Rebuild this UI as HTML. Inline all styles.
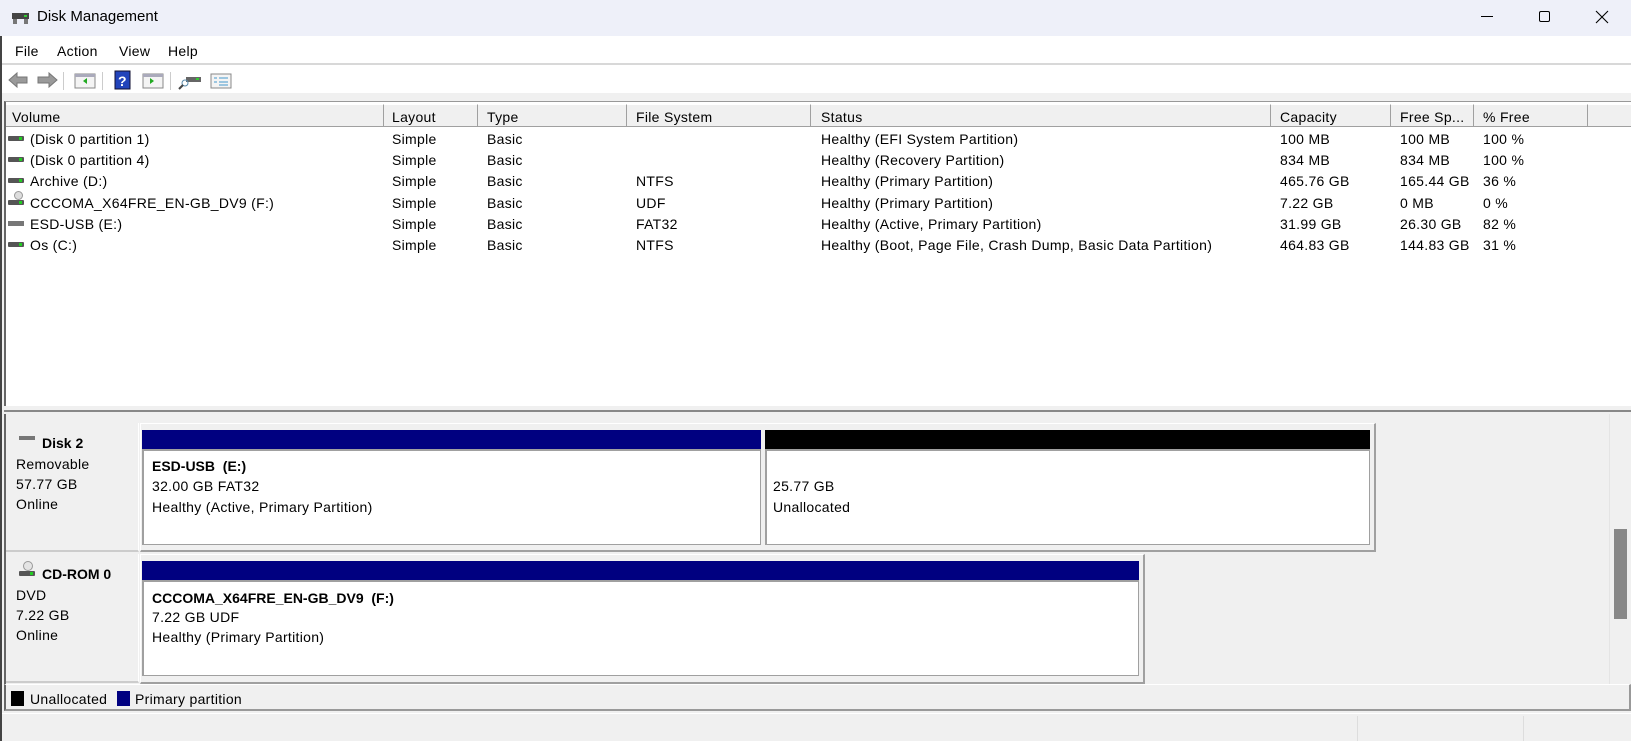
<!DOCTYPE html>
<html><head><meta charset="utf-8"><style>
*{margin:0;padding:0;box-sizing:border-box}
body{width:1631px;height:741px;overflow:hidden;background:#f0f0f0;font-family:"Liberation Sans",sans-serif;font-size:14px;color:#000;position:relative}
.a{position:absolute;white-space:nowrap}
.t{position:absolute;white-space:nowrap;line-height:16px;letter-spacing:0.3px}
.b{font-weight:bold;letter-spacing:0}
.hd{position:absolute;top:104px;height:23px;background:#f0f0f0;border-right:1px solid #a0a0a0;border-bottom:1px solid #a0a0a0;border-top:1px solid #fff}
.ic{position:absolute;width:16px;height:5px;background:#555;border-radius:1px}
.ic::after{content:"";position:absolute;right:2px;top:1px;width:3px;height:3px;background:#2c2}
.pbox{position:absolute;background:#fff;border:1px solid #a0a0a0;box-shadow:inset 1px 1px 0 #a0a0a0}
</style></head><body>
<div class="a" style="left:0;top:0;width:1631px;height:36px;background:#eef0f9"></div>
<div class="a" style="left:12px;top:10px;width:17px;height:14px;">
<div class="a" style="left:0;top:3px;width:17px;height:6px;background:#444"></div>
<div class="a" style="left:12px;top:5px;width:3px;height:2px;background:#3c3"></div>
<div class="a" style="left:1px;top:9px;width:4px;height:5px;background:#777"></div>
<div class="a" style="left:12px;top:9px;width:4px;height:5px;background:#777"></div>
</div>
<div class="t" style="left:37px;top:9px;font-size:15px;letter-spacing:0">Disk Management</div>
<div class="a" style="left:1481px;top:16px;width:12px;height:1px;background:#000"></div>
<div class="a" style="left:1539px;top:11px;width:11px;height:11px;border:1px solid #000;border-radius:2px"></div>
<svg class="a" style="left:1595px;top:10px" width="14" height="14"><path d="M1 1L13 13M13 1L1 13" stroke="#000" stroke-width="1.1"/></svg>
<div class="a" style="left:0;top:36px;width:1631px;height:27px;background:#fff"></div>
<div class="t" style="left:15px;top:43px">File</div>
<div class="t" style="left:57px;top:43px">Action</div>
<div class="t" style="left:119px;top:43px">View</div>
<div class="t" style="left:168px;top:43px">Help</div>
<div class="a" style="left:0;top:63px;width:1631px;height:2px;background:#d8d8d8"></div>
<div class="a" style="left:0;top:65px;width:1631px;height:28px;background:#fff"></div>
<svg class="a" style="left:7px;top:70px" width="230" height="20">
<path d="M2 10L10 3V7H20V13H10V17Z" fill="#9a9a9a" stroke="#777"/>
<path d="M50 10L42 3V7H31V13H42V17Z" fill="#9a9a9a" stroke="#777"/>
<rect x="56" y="2" width="1" height="18" fill="#ccc"/>
<rect x="68" y="4" width="20" height="14" fill="#f4f4f4" stroke="#888"/><rect x="68" y="4" width="20" height="3" fill="#aab"/><path d="M80 8L76 11L80 14Z" fill="#2a2"/>
<rect x="95" y="2" width="1" height="18" fill="#ccc"/>
<rect x="108" y="1" width="15" height="18" fill="#2244bb" stroke="#113"/><text x="111" y="16" fill="#fff" font-size="14" font-weight="bold" font-family="Liberation Sans">?</text>
<rect x="136" y="4" width="20" height="14" fill="#f4f4f4" stroke="#888"/><rect x="136" y="4" width="20" height="3" fill="#aab"/><path d="M143 8L147 11L143 14Z" fill="#2a2"/>
<rect x="163" y="2" width="1" height="18" fill="#ccc"/>
<rect x="179" y="7" width="15" height="5" fill="#666"/><rect x="189" y="8" width="3" height="2" fill="#3c3"/><circle cx="178" cy="13" r="3" fill="none" stroke="#58a"/><path d="M176 15L172 19" stroke="#444" stroke-width="2"/>
<rect x="204" y="4" width="20" height="14" fill="#f4f4f4" stroke="#888"/><path d="M207 8h3M207 12h3M212 8h9M212 12h9M212 15h9" stroke="#49c"/>
</svg>
<div class="a" style="left:4px;top:101px;width:1627px;height:307px;background:#fff;border-top:1px solid #999;border-left:2px solid #666"></div>
<div class="hd" style="left:6px;width:378px"></div>
<div class="hd" style="left:384px;width:94px"></div>
<div class="hd" style="left:478px;width:149px"></div>
<div class="hd" style="left:627px;width:184px"></div>
<div class="hd" style="left:811px;width:460px"></div>
<div class="hd" style="left:1271px;width:120px"></div>
<div class="hd" style="left:1391px;width:83px"></div>
<div class="hd" style="left:1474px;width:114px"></div>
<div class="hd" style="left:1588px;width:43px;border-right:none"></div>
<div class="t" style="left:12px;top:109px">Volume</div>
<div class="t" style="left:392px;top:109px">Layout</div>
<div class="t" style="left:487px;top:109px">Type</div>
<div class="t" style="left:636px;top:109px">File System</div>
<div class="t" style="left:821px;top:109px">Status</div>
<div class="t" style="left:1280px;top:109px">Capacity</div>
<div class="t" style="left:1400px;top:109px">Free Sp...</div>
<div class="t" style="left:1483px;top:109px">% Free</div>

<div class="ic" style="left:8px;top:136px"></div><div class="t" style="left:30px;top:131px">(Disk 0 partition 1)</div><div class="t" style="left:392px;top:131px">Simple</div><div class="t" style="left:487px;top:131px">Basic</div><div class="t" style="left:821px;top:131px">Healthy (EFI System Partition)</div><div class="t" style="left:1280px;top:131px">100 MB</div><div class="t" style="left:1400px;top:131px">100 MB</div><div class="t" style="left:1483px;top:131px">100 %</div>
<div class="ic" style="left:8px;top:157px"></div><div class="t" style="left:30px;top:152px">(Disk 0 partition 4)</div><div class="t" style="left:392px;top:152px">Simple</div><div class="t" style="left:487px;top:152px">Basic</div><div class="t" style="left:821px;top:152px">Healthy (Recovery Partition)</div><div class="t" style="left:1280px;top:152px">834 MB</div><div class="t" style="left:1400px;top:152px">834 MB</div><div class="t" style="left:1483px;top:152px">100 %</div>
<div class="ic" style="left:8px;top:178px"></div><div class="t" style="left:30px;top:173px">Archive (D:)</div><div class="t" style="left:392px;top:173px">Simple</div><div class="t" style="left:487px;top:173px">Basic</div><div class="t" style="left:636px;top:173px">NTFS</div><div class="t" style="left:821px;top:173px">Healthy (Primary Partition)</div><div class="t" style="left:1280px;top:173px">465.76 GB</div><div class="t" style="left:1400px;top:173px">165.44 GB</div><div class="t" style="left:1483px;top:173px">36 %</div>
<div class="a" style="left:14px;top:191px;width:9px;height:9px;border-radius:50%;border:1px solid #999;background:#ddd"></div><div class="ic" style="left:8px;top:200px"></div><div class="t" style="left:30px;top:195px">CCCOMA_X64FRE_EN-GB_DV9 (F:)</div><div class="t" style="left:392px;top:195px">Simple</div><div class="t" style="left:487px;top:195px">Basic</div><div class="t" style="left:636px;top:195px">UDF</div><div class="t" style="left:821px;top:195px">Healthy (Primary Partition)</div><div class="t" style="left:1280px;top:195px">7.22 GB</div><div class="t" style="left:1400px;top:195px">0 MB</div><div class="t" style="left:1483px;top:195px">0 %</div>
<div class="a" style="left:8px;top:221px;width:16px;height:5px;background:#777"></div><div class="t" style="left:30px;top:216px">ESD-USB (E:)</div><div class="t" style="left:392px;top:216px">Simple</div><div class="t" style="left:487px;top:216px">Basic</div><div class="t" style="left:636px;top:216px">FAT32</div><div class="t" style="left:821px;top:216px">Healthy (Active, Primary Partition)</div><div class="t" style="left:1280px;top:216px">31.99 GB</div><div class="t" style="left:1400px;top:216px">26.30 GB</div><div class="t" style="left:1483px;top:216px">82 %</div>
<div class="ic" style="left:8px;top:242px"></div><div class="t" style="left:30px;top:237px">Os (C:)</div><div class="t" style="left:392px;top:237px">Simple</div><div class="t" style="left:487px;top:237px">Basic</div><div class="t" style="left:636px;top:237px">NTFS</div><div class="t" style="left:821px;top:237px">Healthy (Boot, Page File, Crash Dump, Basic Data Partition)</div><div class="t" style="left:1280px;top:237px">464.83 GB</div><div class="t" style="left:1400px;top:237px">144.83 GB</div><div class="t" style="left:1483px;top:237px">31 %</div>
<div class="a" style="left:4px;top:406px;width:1627px;height:6px;background:#f0f0f0;border-bottom:2px solid #888"></div>
<div class="a" style="left:4px;top:414px;width:1627px;height:270px;background:#f0f0f0;border-left:2px solid #666"></div>
<div class="a" style="left:1609px;top:414px;width:1px;height:270px;background:#e4e4e4"></div>
<div class="a" style="left:1614px;top:529px;width:13px;height:90px;background:#888"></div>
<div class="a" style="left:6px;top:423px;width:133px;height:129px;border-right:1px solid #fff;border-bottom:2px solid #ccc"></div>
<div class="a" style="left:19px;top:436px;width:16px;height:4px;background:#777"></div>
<div class="t b" style="left:42px;top:435px">Disk 2</div>
<div class="t" style="left:16px;top:456px">Removable</div>
<div class="t" style="left:16px;top:476px">57.77 GB</div>
<div class="t" style="left:16px;top:496px">Online</div>
<div class="a" style="left:140px;top:423px;width:1236px;height:129px;border:1px solid #fff;border-right:2px solid #a0a0a0;border-bottom:2px solid #a0a0a0"></div>
<div class="a" style="left:142px;top:430px;width:619px;height:19px;background:#000080"></div>
<div class="pbox" style="left:142px;top:449px;width:619px;height:96px"></div>
<div class="a" style="left:765px;top:430px;width:605px;height:19px;background:#000"></div>
<div class="pbox" style="left:765px;top:449px;width:605px;height:96px"></div>
<div class="t b" style="left:152px;top:458px">ESD-USB&nbsp; (E:)</div>
<div class="t" style="left:152px;top:478px">32.00 GB FAT32</div>
<div class="t" style="left:152px;top:499px">Healthy (Active, Primary Partition)</div>
<div class="t" style="left:773px;top:478px">25.77 GB</div>
<div class="t" style="left:773px;top:499px">Unallocated</div>
<div class="a" style="left:6px;top:554px;width:133px;height:129px;border-right:1px solid #fff;border-bottom:2px solid #ccc"></div>
<div class="a" style="left:23px;top:561px;width:10px;height:10px;border-radius:50%;border:1px solid #999;background:#e4e4e4"></div>
<div class="ic" style="left:19px;top:571px"></div>
<div class="t b" style="left:42px;top:566px">CD-ROM 0</div>
<div class="t" style="left:16px;top:587px">DVD</div>
<div class="t" style="left:16px;top:607px">7.22 GB</div>
<div class="t" style="left:16px;top:627px">Online</div>
<div class="a" style="left:140px;top:554px;width:1005px;height:130px;border:1px solid #fff;border-right:2px solid #a0a0a0;border-bottom:2px solid #a0a0a0"></div>
<div class="a" style="left:142px;top:561px;width:997px;height:19px;background:#000080"></div>
<div class="pbox" style="left:142px;top:580px;width:997px;height:96px"></div>
<div class="t b" style="left:152px;top:590px">CCCOMA_X64FRE_EN-GB_DV9&nbsp; (F:)</div>
<div class="t" style="left:152px;top:609px">7.22 GB UDF</div>
<div class="t" style="left:152px;top:629px">Healthy (Primary Partition)</div>
<div class="a" style="left:4px;top:684px;width:1627px;height:27px;background:#f0f0f0;border-top:1px solid #fff;border-left:2px solid #666;border-bottom:2px solid #999;border-right:2px solid #999"></div>
<div class="a" style="left:11px;top:691px;width:13px;height:15px;background:#000"></div>
<div class="t" style="left:30px;top:691px">Unallocated</div>
<div class="a" style="left:117px;top:691px;width:13px;height:15px;background:#000080"></div>
<div class="t" style="left:135px;top:691px">Primary partition</div>
<div class="a" style="left:0;top:713px;width:1631px;height:28px;background:#f0f0f0;border-top:1px solid #fff"></div>
<div class="a" style="left:1357px;top:716px;width:1px;height:25px;background:#ddd"></div>
<div class="a" style="left:1523px;top:716px;width:1px;height:25px;background:#ddd"></div>
<div class="a" style="left:0;top:36px;width:2px;height:705px;background:#444"></div>
</body></html>
